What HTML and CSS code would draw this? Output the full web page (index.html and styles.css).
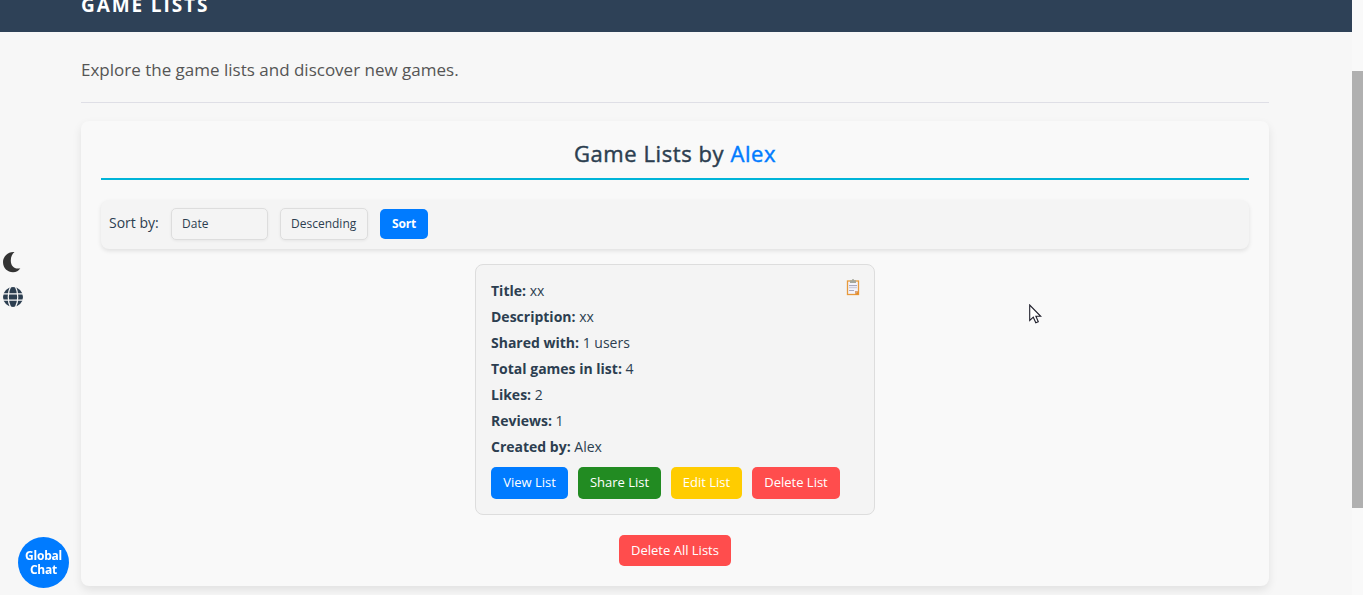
FILE: index.html
```html
<!DOCTYPE html>
<html lang="en">
<head>
<meta charset="utf-8">
<title>Game Lists</title>
<link rel="stylesheet" href="styles.css">
</head>
<body>
<div class="page">
  <header class="header"><h1 class="brand">GAME LISTS</h1></header>
  <main class="main">
    <p class="intro">Explore the game lists and discover new games.</p>
    <section class="panel">
      <h2 class="heading">Game Lists by <span class="user">Alex</span></h2>
      <div class="sortbar">
        <span class="sort-label">Sort by:</span>
        <div class="select select-date">Date</div>
        <div class="select select-order">Descending</div>
        <button class="btn sort-btn">Sort</button>
      </div>
      <article class="card">
        <svg class="clip" width="14" height="18" viewBox="0 0 14 18">
          <rect x="1.500" y="3" width="11" height="13.500" fill="#f3f3fb" stroke="#e79a3c" stroke-width="1.300"/>
          <path d="M4 2.300h2V1.300h2v1h2v2.700H4z" fill="#a5a79c"/>
          <path d="M3 7.500h8M3 12.500h5" stroke="#aaa9bd" stroke-width="1"/>
          <path d="M3 9.500h8" stroke="#cfcddc" stroke-width="1.500"/>
          <path d="M9 16.500v-3.500h3.500z" fill="#d7a27a"/>
          <path d="M9 16.500L12.500 13v3.500z" fill="#e78a24"/>
        </svg>
        <p class="row"><b>Title:</b> xx</p>
        <p class="row"><b>Description:</b> xx</p>
        <p class="row"><b>Shared with:</b> 1 users</p>
        <p class="row"><b>Total games in list:</b> 4</p>
        <p class="row"><b>Likes:</b> 2</p>
        <p class="row"><b>Reviews:</b> 1</p>
        <p class="row"><b>Created by:</b> Alex</p>
        <div class="actions">
          <button class="btn view">View List</button>
          <button class="btn share">Share List</button>
          <button class="btn edit">Edit List</button>
          <button class="btn delete">Delete List</button>
        </div>
      </article>
      <button class="btn delete delete-all">Delete All Lists</button>
    </section>
  </main>
</div>
<div class="scrollbar"><div class="thumb"></div></div>
<div class="side-tools">
  <svg width="20" height="22" viewBox="0 0 20 22"><path d="M11.500 1C5.500.3 0 5 0 11s4.500 10.300 10 10.300c3.300 0 5.600-1.500 7.300-4-6 1.200-9.500-2.300-9.500-7.800C7.800 5.700 9.300 2.800 11.500 1z" fill="#333"/></svg>
  <svg width="20" height="20" viewBox="0 0 20 20"><circle cx="10" cy="10" r="10" fill="#2c3e50"/><g fill="none" stroke="#f7f7f7" stroke-width="1.200"><path d="M0 6.800h20M0 13.200h20"/><path d="M7.500 0C4.500 5 4.500 15 7.500 20M12.500 0c3 5 3 15 0 20"/></g></svg>
</div>
<div class="chat">Global Chat</div>
<svg class="cursor" width="13" height="20" viewBox="0 0 13 20"><path d="M.7 1v15.500l3.600-3.300 2.500 5.600 2.500-1.100-2.400-5.400h4.800z" fill="#fff" stroke="#20202c" stroke-width="1.100"/></svg>
</body>
</html>
```
FILE: styles.css
```css
* { box-sizing: border-box; }
body {
  margin: 0;
  height: 595px;
  display: flex;
  overflow: hidden;
  background: #f7f7f7;
  color: #2c3e50;
  font-family: "Open Sans", "Noto Sans", sans-serif;
}
h1, h2, p { margin: 0; }
.page { width: 1352px; }
.header {
  height: 32px;
  padding-left: 81px;
  background: #2e4157;
  overflow: hidden;
}
.brand {
  margin-top: -8px;
  font-size: 19px;
  line-height: 26px;
  font-weight: 700;
  letter-spacing: 1.900px;
  color: #fff;
}
.main { padding: 0 83px 0 81px; }
.intro {
  height: 71px;
  padding-top: 24px;
  border-bottom: 1px solid #dfdfe6;
  font-size: 17px;
  line-height: 28px;
  color: #555;
}
.panel {
  height: 465px;
  margin-top: 18px;
  padding: 16px 20px 20px;
  display: flex;
  flex-direction: column;
  align-items: center;
  border-radius: 8px;
  background: #f9f9f9;
  box-shadow: 0 4px 10px rgba(0, 0, 0, .09);
}
.heading {
  width: 100%;
  height: 43px;
  border-bottom: 2px solid #00b4d8;
  font-size: 22px;
  line-height: 32px;
  font-weight: 500;
  letter-spacing: .580px;
  -webkit-text-stroke: .450px currentColor;
  text-align: center;
}
.user { color: #007bff; }
.sortbar {
  width: 100%;
  height: 49px;
  margin-top: 20px;
  padding: 0 8px 2px;
  display: flex;
  align-items: center;
  border-radius: 8px;
  background: #f4f4f4;
  box-shadow: 0 2px 4px rgba(0, 0, 0, .1);
}
.sort-label { width: 62px; margin-top: -3px; font-size: 14px; }
.select {
  height: 32px;
  padding: 0 10px;
  border: 1px solid #ddd;
  border-radius: 5px;
  box-shadow: 0 1px 3px rgba(0, 0, 0, .06);
  font-size: 12px;
  line-height: 30px;
  white-space: nowrap;
}
.select-date { width: 97px; margin-right: 12px; }
.select-order { width: 88px; margin-right: 12px; }
.btn {
  padding: 0;
  border: 0;
  border-radius: 5px;
  color: #fff;
  font-family: inherit;
  font-size: 13px;
  line-height: 18px;
  white-space: nowrap;
}
.sort-btn { width: 48px; height: 30px; background: #007bff; font-size: 12px; font-weight: 700; letter-spacing: -.200px; }
.card {
  position: relative;
  width: 400px;
  height: 251px;
  margin-top: 15px;
  padding: 15px;
  border: 1px solid #ddd;
  border-radius: 8px;
  background: #f4f4f4;
}
.clip { position: absolute; right: 14px; top: 13px; }
.row { height: 21px; margin-bottom: 5px; font-size: 14px; line-height: 21px; }
.actions { display: flex; gap: 10px; padding-top: 5px; }
.actions .btn { height: 32px; padding-bottom: 2px; }
.view { width: 77px; background: #007bff; }
.share { width: 83px; background: #228b22; }
.edit { width: 71px; background: #ffcc00; }
.delete { width: 88px; background: #ff4d4d; }
.delete-all { width: 112px; height: 31px; margin-top: 20px; padding-bottom: 2px; }
.scrollbar { width: 11px; padding-top: 71px; background: #f9f9f9; }
.thumb { height: 437px; background: #b0b0b0; }
.side-tools {
  position: fixed;
  left: 3px;
  top: 251px;
  display: flex;
  flex-direction: column;
  gap: 14px;
}
.chat {
  position: fixed;
  left: 18px;
  top: 537px;
  width: 51px;
  height: 51px;
  padding-top: 12px;
  border-radius: 50%;
  background: #007bff;
  color: #fff;
  font-size: 12px;
  line-height: 14px;
  font-weight: 700;
  letter-spacing: -.200px;
  text-align: center;
}
.cursor { position: fixed; left: 1029px; top: 304px; }
```
